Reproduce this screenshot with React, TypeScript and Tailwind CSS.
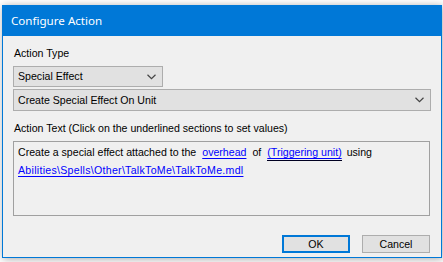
import React from 'react'

function Chevron() {
    return (
        <svg width="9" height="6" viewBox="0 0 9 6" className="shrink-0">
            <path d="M0.5 0.8 L4.5 4.6 L8.5 0.8" fill="none" stroke="#444" strokeWidth="1.2" />
        </svg>
    )
}

function Combo({ label, className }: { label: string; className: string }) {
    return (
        <div className={`flex items-center justify-between border border-[#adadad] bg-[#e1e1e1] pl-[4px] pr-[6px] ${className}`}>
            <span>{label}</span>
            <Chevron />
        </div>
    )
}

function Link({ children, focused, className = '' }: { children: React.ReactNode; focused?: boolean; className?: string }) {
    return (
        <span
            className={`inline-block leading-[15px] text-[#0000ff] underline decoration-[#0000ff] underline-offset-[2px] ${focused ? 'border-b border-[#000020]' : ''} ${className}`}
        >
            {children}
        </span>
    )
}

export default function App() {
    return (
        <div className="w-[443px] h-[262px] bg-white pt-[5px] pl-[2px]" style={{ fontFamily: '"Liberation Sans", Arial, sans-serif' }}>
            <div className="w-[440px] h-[253px] border border-[#0078d7] bg-[#f0f0f0] flex flex-col shadow-[1px_1px_8px_rgba(0,0,0,0.35)]">
                {/* Title Bar */}
                <div
                    className="h-[30px] bg-[#0078d7] text-white text-[11.6px] flex items-center pl-[8px]"
                    style={{ fontFamily: '"Noto Sans", "Open Sans", sans-serif' }}
                >
                    Configure Action
                </div>

                {/* Content */}
                <div className="flex-1 flex flex-col px-[10px] pt-[11px] text-[10.6px] text-black leading-[13px]">
                    <div className="pl-[1px]">Action Type</div>
                    <Combo label="Special Effect" className="mt-[6px] w-[150px] h-[21px]" />
                    <Combo label="Create Special Effect On Unit" className="mt-[2px] w-[418px] h-[22px]" />

                    <div className="pl-[1px] mt-[11px]">Action Text (Click on the underlined sections to set values)</div>

                    <div className="mt-[6px] w-[417px] h-[75px] border border-[#a0a0a0] px-[4px] pt-[1px] leading-[18px]">
                        <div>
                            Create a special effect attached to the
                            <Link className="ml-[6px]">overhead</Link>
                            <span className="ml-[6px]">of</span>
                            <Link focused className="ml-[6px]">(Triggering unit)</Link>
                            <span className="ml-[5px]">using</span>
                        </div>
                        <div>
                            <Link className="tracking-[0.28px]">Abilities\Spells\Other\TalkToMe\TalkToMe.mdl</Link>
                        </div>
                    </div>

                    {/* Buttons */}
                    <div className="flex justify-end gap-[12px] mt-[19px] pr-[1px]">
                        <button className="w-[68px] h-[18px] border-2 border-[#0078d7] bg-[#e1e1e1] flex items-center justify-center">
                            OK
                        </button>
                        <button className="w-[68px] h-[18px] border border-[#adadad] bg-[#e1e1e1] flex items-center justify-center">
                            Cancel
                        </button>
                    </div>
                </div>
            </div>
        </div>
    )
}
